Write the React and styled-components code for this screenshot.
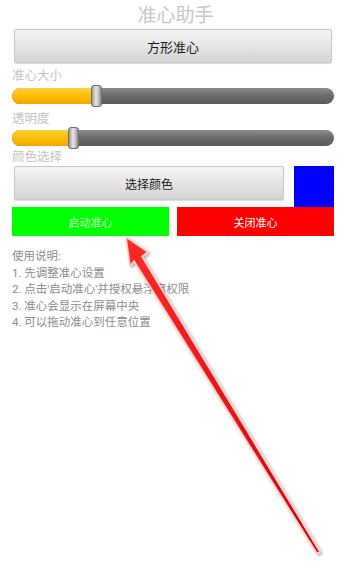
import React from "react";
import styled, { createGlobalStyle } from "styled-components";

const GlobalStyle = createGlobalStyle`
  html, body {
    margin: 0;
    padding: 0;
    background: #ffffff;
  }
  body {
    font-family: "Roboto", "Noto Sans CJK SC", sans-serif;
  }
`;

const Screen = styled.div`
  position: relative;
  width: 343px;
  height: 566px;
  overflow: hidden;
  background: #ffffff;
  padding: 0 9px 0 12px;
  box-sizing: border-box;
  display: flex;
  flex-direction: column;
`;

const Title = styled.div`
  height: 29px;
  line-height: 31px;
  text-align: center;
  font-size: 19px;
  color: #c8c8c8;
  padding-left: 5px;
`;

const GrayButton = styled.div`
  height: ${({ $h }) => $h}px;
  margin: 0 ${({ $mr }) => $mr || 0}px 0 2px;
  flex: ${({ $grow }) => ($grow ? 1 : "none")};
  display: flex;
  align-items: center;
  justify-content: center;
  box-sizing: border-box;
  border: 1px solid #c9c9c9;
  border-radius: 2px;
  background: linear-gradient(#f4f4f4, #e2e2e2 60%, #d4d4d4);
  box-shadow: 0 1px 1px rgba(0, 0, 0, 0.15);
  font-size: ${({ $fs }) => $fs}px;
  color: #1a1a1a;
`;

const Label = styled.div`
  height: ${({ $h }) => $h}px;
  display: flex;
  align-items: flex-end;
  font-size: 12.5px;
  color: #c4c4c4;
  line-height: 16px;
`;

const SliderBox = styled.div`
  position: relative;
  height: 22px;
  margin-top: ${({ $mt }) => $mt}px;
  display: flex;
  align-items: center;
`;

const Track = styled.div`
  position: relative;
  width: 100%;
  height: 16px;
  border-radius: 8px;
  background: linear-gradient(#8c8c8c, #6a6a6a 50%, #5a5a5a);
  overflow: hidden;
`;

const Fill = styled.div`
  height: 100%;
  background: linear-gradient(#ffd23c, #fcbb00 55%, #f0a800);
`;

const Thumb = styled.div`
  position: absolute;
  top: 0;
  width: 11px;
  height: 22px;
  margin-left: -2px;
  box-sizing: border-box;
  border-radius: 3px;
  border: 1px solid #6c6c6c;
  background: linear-gradient(90deg, #9a9a9a, #e6e6e6 45%, #c4c4c4 70%, #8c8c8c);
`;

const ColorRow = styled.div`
  display: flex;
  align-items: flex-start;
  margin-top: 1px;
  height: 41px;
`;

const Swatch = styled.div`
  width: 40px;
  height: 41px;
  margin-left: 10px;
  background: #0000ff;
`;

const ActionRow = styled.div`
  display: flex;
  gap: 8px;
  height: 29px;
`;

const ActionButton = styled.div`
  flex: 1;
  display: flex;
  align-items: center;
  justify-content: center;
  background: ${({ $bg }) => $bg};
  color: ${({ $fg }) => $fg};
  font-size: 11px;
`;

const Help = styled.div`
  margin-top: 12px;
  font-size: 11.5px;
  line-height: 16.6px;
  color: #8c8c8c;
`;

const ArrowLayer = styled.svg`
  position: absolute;
  left: 0;
  top: 0;
  pointer-events: none;
`;

const Slider = ({ value, mt }) => (
  <SliderBox $mt={mt}>
    <Track>
      <Fill style={{ width: `${value}px` }} />
    </Track>
    <Thumb style={{ left: `${value}px` }} />
  </SliderBox>
);

const App = () => {
  return (
    <>
      <GlobalStyle />
      <Screen>
        <Title>准心助手</Title>
        <GrayButton $h={34} $mr={2} $fs={13}>
          方形准心
        </GrayButton>
        <Label $h={21}>准心大小</Label>
        <Slider value={81} mt={1} />
        <Label $h={20}>透明度</Label>
        <Slider value={58} mt={0} />
        <Label $h={16}>颜色选择</Label>
        <ColorRow>
          <GrayButton $h={34} $grow $fs={12}>
            选择颜色
          </GrayButton>
          <Swatch />
        </ColorRow>
        <ActionRow>
          <ActionButton $bg="#00ff00" $fg="#c9ffc4">
            启动准心
          </ActionButton>
          <ActionButton $bg="#ff0000" $fg="#ffffff">
            关闭准心
          </ActionButton>
        </ActionRow>
        <Help>
          <div>使用说明:</div>
          <div>1. 先调整准心设置</div>
          <div>2. 点击'启动准心'并授权悬浮窗权限</div>
          <div>3. 准心会显示在屏幕中央</div>
          <div>4. 可以拖动准心到任意位置</div>
        </Help>
        <ArrowLayer width="343" height="566" viewBox="0 0 343 566">
          <defs>
            <filter id="sh" x="-20%" y="-20%" width="140%" height="140%">
              <feDropShadow dx="1.5" dy="1.5" stdDeviation="1.5" floodColor="#000" floodOpacity="0.35" />
            </filter>
            <linearGradient id="rg" x1="0" y1="0" x2="1" y2="0">
              <stop offset="0" stopColor="#ff2a2a" />
              <stop offset="1" stopColor="#d40000" />
            </linearGradient>
          </defs>
          <polygon
            points="126,237 148,252 142,256.5 320,552 317,553.5 134,261 130,266"
            fill="url(#rg)"
            stroke="#f4d0d0"
            strokeWidth="1.6"
            strokeLinejoin="round"
            filter="url(#sh)"
          />
        </ArrowLayer>
      </Screen>
    </>
  );
};

export default App;
